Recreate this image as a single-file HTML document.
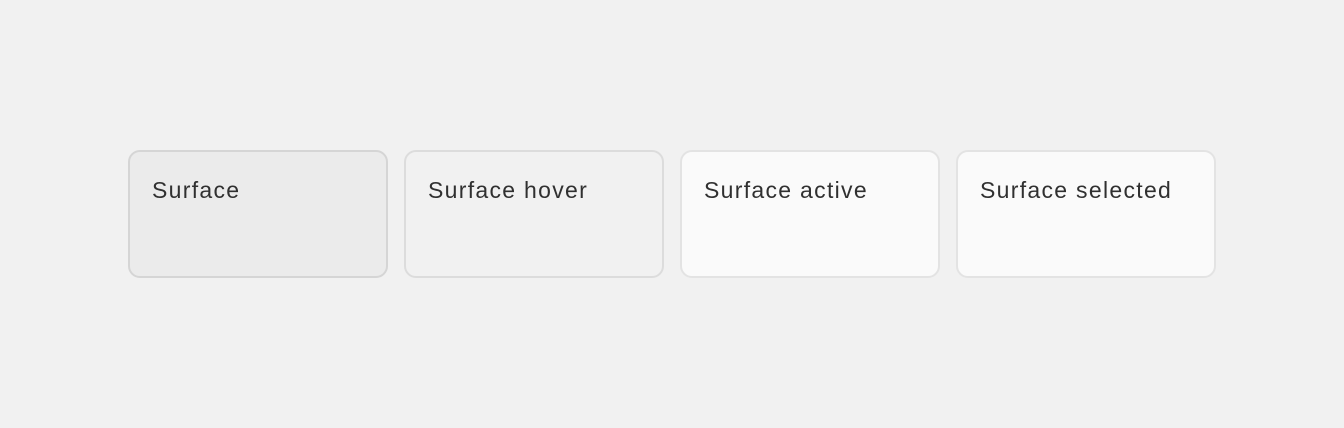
<!DOCTYPE html>
<html><head><style>
html,body{margin:0;padding:0;width:1344px;height:428px;background:#f1f1f1;overflow:hidden}
.row{position:absolute;left:128px;top:150px;display:flex;gap:16px}
.c{box-sizing:border-box;width:260px;height:128px;border:2px solid #d6d6d6;border-radius:12px;padding:24px 22px 0;font-family:"Liberation Sans",sans-serif;font-size:23px;color:#303030;line-height:28px;letter-spacing:1.3px}
</style></head><body>
<div class="row">
<div class="c" style="background:#ebebeb;border-color:#d5d5d5">Surface</div>
<div class="c" style="background:#f1f1f1;border-color:#dcdcdc">Surface hover</div>
<div class="c" style="background:#fafafa;border-color:#e3e3e3">Surface active</div>
<div class="c" style="background:#fafafa;border-color:#e3e3e3">Surface selected</div>
</div>
</body></html>
